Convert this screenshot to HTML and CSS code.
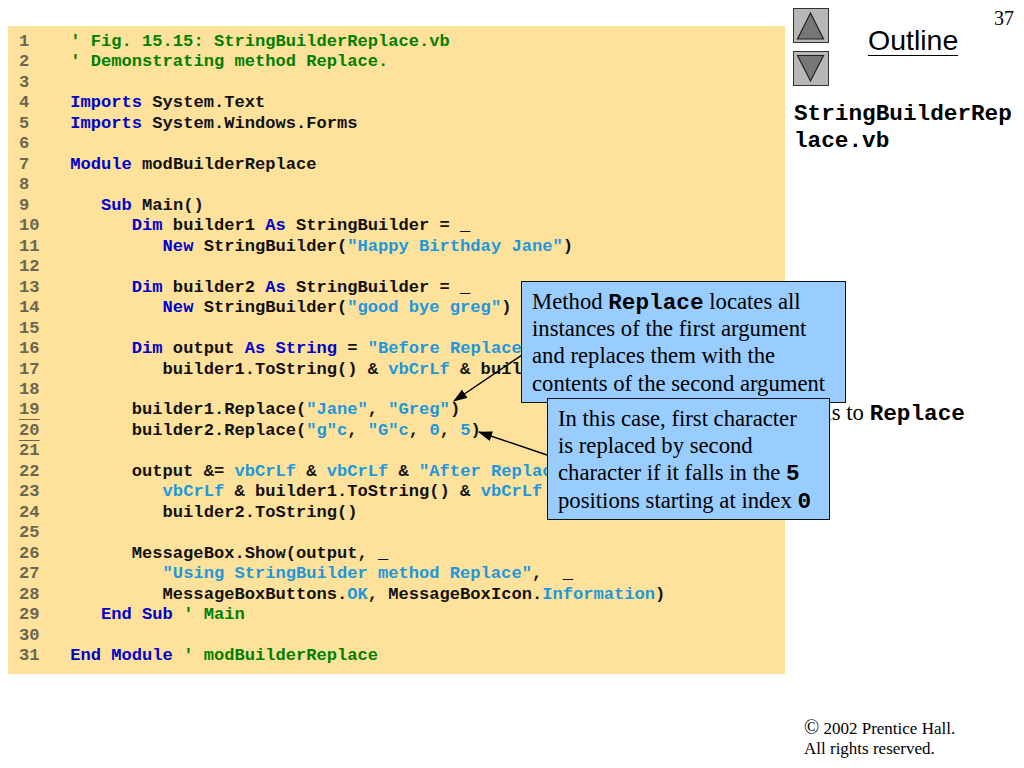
FILE: index.html
```html
<!DOCTYPE html>
<html lang="en">
<head>
<meta charset="utf-8">
<title>StringBuilderReplace.vb</title>
<link rel="stylesheet" href="styles.css">
</head>
<body>
<div class="slide">
  <main class="code">
<div class="ln"><span class="n">1</span>   <span class="c">' Fig. 15.15: StringBuilderReplace.vb</span></div>
<div class="ln"><span class="n">2</span>   <span class="c">' Demonstrating method Replace.</span></div>
<div class="ln"><span class="n">3</span></div>
<div class="ln"><span class="n">4</span>   <span class="k">Imports</span> System.Text</div>
<div class="ln"><span class="n">5</span>   <span class="k">Imports</span> System.Windows.Forms</div>
<div class="ln"><span class="n">6</span></div>
<div class="ln"><span class="n">7</span>   <span class="k">Module</span> modBuilderReplace</div>
<div class="ln"><span class="n">8</span></div>
<div class="ln"><span class="n">9</span>      <span class="k">Sub</span> Main()</div>
<div class="ln"><span class="n">10</span>         <span class="k">Dim</span> builder1 <span class="k">As</span> StringBuilder = _</div>
<div class="ln"><span class="n">11</span>            <span class="k">New</span> StringBuilder(<span class="s">"Happy Birthday Jane"</span>)</div>
<div class="ln"><span class="n">12</span></div>
<div class="ln"><span class="n">13</span>         <span class="k">Dim</span> builder2 <span class="k">As</span> StringBuilder = _</div>
<div class="ln"><span class="n">14</span>            <span class="k">New</span> StringBuilder(<span class="s">"good bye greg"</span>)</div>
<div class="ln"><span class="n">15</span></div>
<div class="ln"><span class="n">16</span>         <span class="k">Dim</span> output <span class="k">As</span> <span class="k">String</span> = <span class="s">"Before Replacements:"</span> &amp; <span class="s">vbCrLf</span> &amp; _</div>
<div class="ln"><span class="n">17</span>            builder1.ToString() &amp; <span class="s">vbCrLf</span> &amp; builder2.ToString()</div>
<div class="ln"><span class="n">18</span></div>
<div class="ln"><span class="n u">19</span>         builder1.Replace(<span class="s">"Jane"</span>, <span class="s">"Greg"</span>)</div>
<div class="ln"><span class="n u">20</span>         builder2.Replace(<span class="s">"g"c</span>, <span class="s">"G"c</span>, <span class="s">0</span>, <span class="s">5</span>)</div>
<div class="ln"><span class="n">21</span></div>
<div class="ln"><span class="n">22</span>         output &amp;= <span class="s">vbCrLf</span> &amp; <span class="s">vbCrLf</span> &amp; <span class="s">"After Replacements:"</span> &amp; _</div>
<div class="ln"><span class="n">23</span>            <span class="s">vbCrLf</span> &amp; builder1.ToString() &amp; <span class="s">vbCrLf</span> &amp; _</div>
<div class="ln"><span class="n">24</span>            builder2.ToString()</div>
<div class="ln"><span class="n">25</span></div>
<div class="ln"><span class="n">26</span>         MessageBox.Show(output, _</div>
<div class="ln"><span class="n">27</span>            <span class="s">"Using StringBuilder method Replace"</span>,  _</div>
<div class="ln"><span class="n">28</span>            MessageBoxButtons.<span class="s">OK</span>, MessageBoxIcon.<span class="s">Information</span>)</div>
<div class="ln"><span class="n">29</span>      <span class="k">End Sub</span> <span class="c">' Main</span></div>
<div class="ln"><span class="n">30</span></div>
<div class="ln"><span class="n">31</span>   <span class="k">End Module</span> <span class="c">' modBuilderReplace</span></div>
  </main>

  <aside class="side">
    <div class="head">
      <div class="nav">
        <div class="btn"><svg viewBox="0 0 34 33" width="34" height="33"><path class="tri" d="M16.5 4 L29.5 30 L3.5 30 Z"/></svg></div>
        <div class="btn"><svg viewBox="0 0 34 33" width="34" height="33"><path class="tri" d="M3.5 3.5 L29.5 3.5 L16.5 29 Z"/></svg></div>
      </div>
      <h1 class="outline">Outline</h1>
      <div class="page">37</div>
    </div>
    <h2 class="file">StringBuilderRep<br>lace.vb</h2>
    <p class="note">Calls to <b class="m">Replace</b></p>
    <footer class="copy"><span class="cr">©</span> 2002 Prentice Hall.<br>All rights reserved.</footer>
  </aside>

  <svg class="arrows" width="1024" height="768" viewBox="0 0 1024 768">
    <defs>
      <marker id="head" markerUnits="userSpaceOnUse" markerWidth="14" markerHeight="10" refX="13" refY="5" orient="auto">
        <path d="M0 0 L14 5 L0 10 Z" fill="#000"/>
      </marker>
    </defs>
    <line x1="522" y1="355" x2="454" y2="401" class="arrow" marker-end="url(#head)"/>
    <line x1="547" y1="455" x2="479" y2="432" class="arrow" marker-end="url(#head)"/>
  </svg>

  <div class="callout one">Method <b class="m">Replace</b> locates all<br>instances of the first argument<br>and replaces them with the<br>contents of the second argument</div>
  <div class="callout two">In this case, first character<br>is replaced by second<br>character if it falls in the <b class="m">5</b><br>positions starting at index <b class="m">0</b></div>
</div>
</body>
</html>
```
FILE: styles.css
```css
html, body { margin: 0; padding: 0; background: #fff; }
.slide {
  position: relative;
  display: flex;
  width: 1024px;
  height: 768px;
  overflow: hidden;
  font-family: "Liberation Serif", "Times New Roman", serif;
  color: #000;
}
.code {
  box-sizing: border-box;
  width: 777px;
  height: 648px;
  margin: 26px 0 0 8px;
  padding: 6px 0 0 11px;
  background: #fee19b;
  font: bold 17.1px/20.47px "Liberation Mono", "Courier New", monospace;
  color: #111;
}
.ln { height: 20.47px; white-space: pre; }
.n { display: inline-block; width: 20.5px; color: #6b6650; }
.n.u { text-decoration: underline; text-decoration-thickness: 1px; text-underline-offset: 5px; }
.c { color: #008000; }
.k { color: #0000cc; }
.s { color: #1d98dc; }
.side {
  flex: 1;
  display: flex;
  flex-direction: column;
  padding-left: 9px;
  padding-right: 10px;
}
.head { display: flex; align-items: flex-start; }
.nav {
  display: flex;
  flex-direction: column;
  gap: 8px;
  margin: 8px 0 0 -1px;
}
.btn {
  display: flex;
  width: 34px;
  height: 33px;
  background: #b7b7b7;
  border: 1px solid #333;
}
.tri { fill: #777; stroke: #222; stroke-width: 1.2; }
.outline {
  margin: 25px 0 0 39px;
  border-bottom: 1px solid #000;
  font: normal 28.5px/30px "Liberation Sans", Arial, sans-serif;
}
.page { margin-left: auto; margin-top: 7px; font-size: 20px; line-height: 23px; }
.file {
  margin: 15px 0 0;
  font: bold 22.7px/27px "Liberation Mono", "Courier New", monospace;
}
.note {
  margin: 244px 0 0 0;
  font-size: 22.7px;
  line-height: 27px;
}
.m { font-family: "Liberation Mono", "Courier New", monospace; font-size: 22.7px; line-height: 1; }
.copy {
  margin-top: auto;
  margin-bottom: 9px;
  padding-left: 10px;
  font-size: 17px;
  line-height: 20px;
}
.cr { font-size: 20px; line-height: 1; }
.arrows { position: absolute; left: 0; top: 0; }
.arrow { stroke: #000; stroke-width: 1.5; }
.callout {
  position: absolute;
  box-sizing: border-box;
  padding: 5.5px 10px 0;
  background: #99ccff;
  border: 1px solid #111;
  font-size: 22.7px;
  line-height: 27.4px;
  white-space: nowrap;
}
.one { left: 521px; top: 281px; width: 325px; height: 122px; }
.two { left: 547px; top: 398px; width: 283px; height: 122px; }
```
